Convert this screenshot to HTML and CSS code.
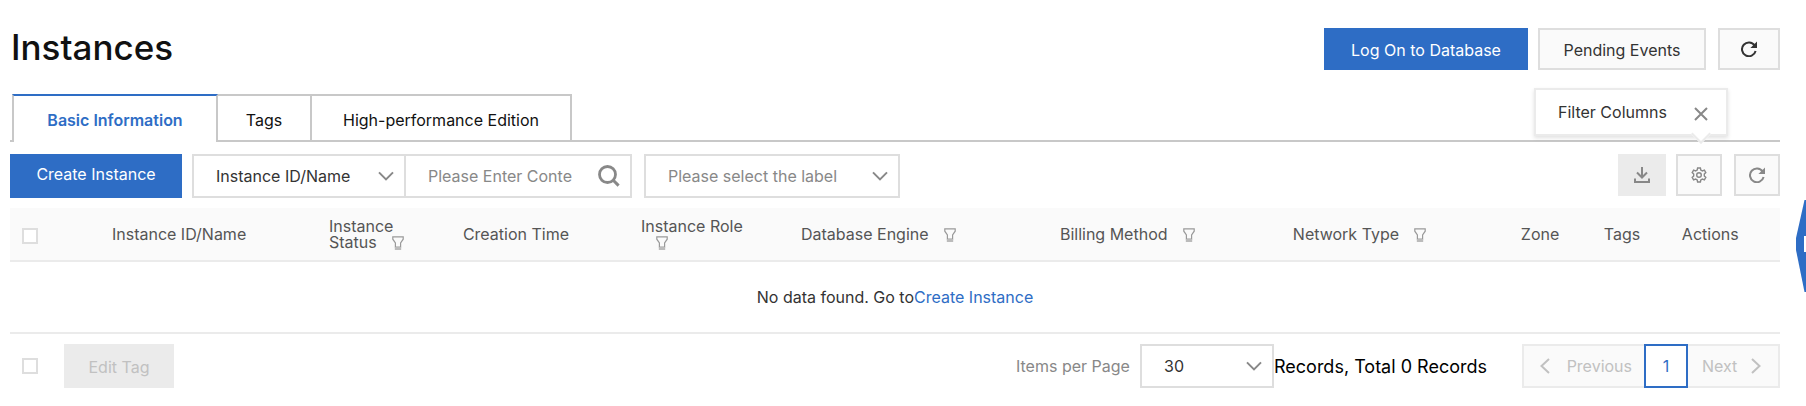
FILE: index.html
```html
<!DOCTYPE html>
<html lang="en">
<head>
<meta charset="utf-8">
<title>Instances</title>
<link rel="stylesheet" href="styles.css">
</head>
<body>
<svg class="sprite" aria-hidden="true">
  <symbol id="refresh" viewBox="0 0 16 16"><path d="M13.6 4.4A6.9 6.9 0 1 0 14.6 10" fill="none" stroke="currentColor" stroke-width="2"/><path d="M16 .4V7H9.4z" fill="currentColor"/></symbol>
  <symbol id="chevron" viewBox="0 0 16 10"><path d="M1 1.4l7 7 7-7" fill="none" stroke="currentColor" stroke-width="2"/></symbol>
  <symbol id="funnel" viewBox="0 0 12 14"><path d="M.8.8h10.4v2.4L8.6 7v4H3.4V7L.8 3.200z" fill="none" stroke="currentColor" stroke-width="1.200"/><path d="M2.800 11h6.400v3H2.800z" fill="#bbb"/></symbol>
</svg>
<main class="page">
  <header class="page-header">
    <h1 class="title">Instances</h1>
    <div class="actions">
      <button class="btn btn-primary" type="button">Log On to Database</button>
      <button class="btn btn-normal" type="button">Pending Events</button>
      <button class="btn btn-normal btn-refresh" type="button" aria-label="Refresh"><svg class="icon"><use href="#refresh"/></svg></button>
    </div>
  </header>

  <nav class="tabs">
    <button class="tab tab-active" type="button">Basic Information</button>
    <button class="tab tab-tags" type="button">Tags</button>
    <button class="tab tab-edition" type="button">High-performance Edition</button>
  </nav>

  <div class="toolbar">
    <button class="btn btn-primary btn-create" type="button">Create Instance</button>
    <div class="search-group">
      <div class="select field-type">
        <select aria-label="Search by"><option>Instance ID/Name</option></select>
        <svg class="chevron"><use href="#chevron"/></svg>
      </div>
      <div class="search">
        <input type="text" placeholder="Please Enter Content" aria-label="Search content">
        <button class="search-btn" type="button" aria-label="Search"><svg viewBox="0 0 22 22"><circle cx="9.500" cy="9.500" r="8" fill="none" stroke="currentColor" stroke-width="2.800"/><path d="M15 15l5.600 5.600" stroke="currentColor" stroke-width="3"/></svg></button>
      </div>
    </div>
    <div class="select field-label">
      <select aria-label="Label"><option>Please select the label</option></select>
      <svg class="chevron"><use href="#chevron"/></svg>
    </div>
    <div class="tools">
      <button class="btn btn-export" type="button" disabled aria-label="Export"><svg class="icon" viewBox="0 0 16 16"><path d="M8 0v10M3 5.500l5 5 5-5M1 11.500V15h14v-3.500" fill="none" stroke="currentColor" stroke-width="2"/></svg></button>
      <div class="tool-anchor">
        <button class="btn btn-normal btn-tool" type="button" aria-label="Filter Columns"><svg class="icon" viewBox="0 0 16 16" fill="none" stroke="currentColor" stroke-width="1.400"><path d="M6.600 1h2.800l.4 2 1.600.9 2-.7 1.400 2.400-1.500 1.400v2l1.500 1.400-1.400 2.400-2-.7-1.600.9-.4 2H6.600l-.4-2-1.600-.9-2 .7-1.400-2.400L2.700 9V7L1.200 5.600l1.400-2.400 2 .7L6.200 3z"/><circle cx="8" cy="8" r="2.300"/></svg></button>
        <div class="balloon" role="tooltip">
          <span>Filter Columns</span>
          <button class="balloon-close" type="button" aria-label="Close"><svg viewBox="0 0 14 14"><path d="M1 1l12 12M13 1L1 13" stroke="currentColor" stroke-width="2"/></svg></button>
        </div>
      </div>
      <button class="btn btn-normal btn-tool" type="button" aria-label="Refresh list"><svg class="icon"><use href="#refresh"/></svg></button>
    </div>
  </div>

  <table class="grid">
    <colgroup>
      <col class="c-check"><col class="c-id"><col class="c-status"><col class="c-time"><col class="c-role"><col class="c-engine"><col class="c-billing"><col class="c-network"><col class="c-zone"><col class="c-tags"><col class="c-actions">
    </colgroup>
    <thead>
      <tr>
        <th class="cell-check"><input class="check" type="checkbox" aria-label="Select all"></th>
        <th>Instance ID/Name</th>
        <th>Instance<br>Status<svg class="funnel"><use href="#funnel"/></svg></th>
        <th>Creation Time</th>
        <th>Instance Role<br><svg class="funnel"><use href="#funnel"/></svg></th>
        <th>Database Engine<svg class="funnel"><use href="#funnel"/></svg></th>
        <th>Billing Method<svg class="funnel"><use href="#funnel"/></svg></th>
        <th>Network Type<svg class="funnel"><use href="#funnel"/></svg></th>
        <th>Zone</th>
        <th>Tags</th>
        <th>Actions</th>
      </tr>
    </thead>
    <tbody>
      <tr><td class="empty" colspan="11">No data found. Go to<a href="#create">Create Instance</a></td></tr>
    </tbody>
  </table>

  <footer class="footer">
    <input class="check" type="checkbox" aria-label="Select all on page">
    <button class="btn btn-edit" type="button" disabled>Edit Tag</button>
    <div class="pagination">
      <label class="per-page" for="page-size">Items per Page</label>
      <div class="select field-size">
        <select id="page-size"><option>30</option></select>
        <svg class="chevron"><use href="#chevron"/></svg>
      </div>
      <span class="total">Records, Total 0 Records</span>
      <div class="pager">
        <button class="pager-step pager-prev" type="button" disabled><svg viewBox="0 0 10 16"><path d="M9 1L1.500 8 9 15" fill="none" stroke="currentColor" stroke-width="2"/></svg>Previous</button>
        <button class="pager-current" type="button">1</button>
        <button class="pager-step pager-next" type="button" disabled>Next<svg viewBox="0 0 10 16"><path d="M1 1l7.500 7L1 15" fill="none" stroke="currentColor" stroke-width="2"/></svg></button>
      </div>
    </div>
  </footer>
</main>
<aside class="side-handle"><svg viewBox="0 0 10 92"><path d="M10 0H8.500L0 38v12l8.500 42H10z" fill="#2e6dc5"/><path d="M8 36h2v16H8z" fill="#fff"/></svg></aside>
</body>
</html>
```
FILE: styles.css
```css
* { box-sizing: border-box; }

body {
  margin: 0;
  background: #fff;
  color: #333;
  font-family: Inter, "Liberation Sans", sans-serif;
  font-size: 16px;
  line-height: 20px;
  overflow-x: hidden;
}

button, input, select {
  font: inherit;
  color: inherit;
  border-radius: 0;
  margin: 0;
}

button { background: none; border: 0; padding: 0; white-space: nowrap; }
svg { display: block; }
a { color: #2e6dc5; text-decoration: none; }

.sprite { position: absolute; width: 0; height: 0; }
.page { padding: 28px 26px 18px 10px; }

.page-header { display: flex; justify-content: space-between; height: 66px; }
.title { margin: 0; font-size: 35px; line-height: 38px; font-weight: 500; color: #111; padding-left: 1px; }
.actions { display: flex; align-items: flex-start; }

.btn {
  display: flex;
  align-items: center;
  justify-content: center;
  height: 42px;
  padding: 2px 22px 0;
}
.btn-primary { background: #2e6dc5; color: #fff; min-width: 204px; }
.btn-normal { background: #fafafa; border: 2px solid #dedede; min-width: 168px; margin-left: 10px; }
.btn-refresh { min-width: 62px; width: 62px; padding: 0; margin-left: 12px; }
.icon { width: 16px; height: 16px; }

.tabs { display: flex; border-bottom: 2px solid #c8c8c8; height: 48px; padding-left: 2px; }
.tab {
  height: 46px;
  padding: 4px 20px 0;
  border-top: 2px solid #c8c8c8;
  border-right: 2px solid #c8c8c8;
  color: #111;
}
.tab-tags { min-width: 94px; }
.tab-edition { min-width: 260px; }
.tab-active {
  height: 48px;
  min-width: 206px;
  padding-top: 2px;
  border-left: 2px solid #c8c8c8;
  border-top-color: #2e6dc5;
  background: #fff;
  color: #2e6dc5;
  font-weight: 600;
}

.toolbar { display: flex; align-items: flex-start; padding: 12px 0 10px; }
.btn-create { height: 44px; min-width: 172px; padding: 0 22px 4px; }
.search-group { display: flex; margin-left: 10px; }

.select { position: relative; height: 44px; border: 2px solid #dedede; background: #fff; }
.select select {
  appearance: none;
  width: 100%;
  height: 100%;
  padding: 0 44px 0 22px;
  border: 0;
  background: transparent;
}
.chevron {
  position: absolute;
  right: 10px;
  top: 15px;
  width: 16px;
  height: 10px;
  color: #888;
  pointer-events: none;
}
.field-type { width: 214px; }
.search { display: flex; align-items: center; width: 226px; border: 2px solid #dedede; border-left: 0; height: 44px; }
.search input { flex: 1; min-width: 0; height: 100%; margin-left: 22px; padding: 0; border: 0; background: none; }
.search input::placeholder { color: #888; opacity: 1; }
.search-btn { margin: 0 10px 0 26px; color: #888; }
.search-btn svg { width: 22px; height: 22px; }
.field-label { width: 256px; margin-left: 12px; color: #888; }

.tools { display: flex; margin-left: auto; color: #888; }
.btn-export { width: 48px; padding: 0; background: #ebebeb; color: #888; }
.tool-anchor { position: relative; margin-right: 2px; }
.btn-tool { min-width: 46px; width: 46px; padding: 0; }

.balloon {
  position: absolute;
  right: -6px;
  bottom: 60px;
  display: flex;
  align-items: center;
  justify-content: space-between;
  width: 194px;
  height: 48px;
  padding: 0 18px 0 22px;
  background: #fff;
  border: 2px solid #ebebeb;
  box-shadow: 0 2px 4px rgba(0, 0, 0, .12);
  color: #333;
  white-space: nowrap;
}
.balloon::after {
  content: "";
  position: absolute;
  right: 18px;
  bottom: -7px;
  width: 12px;
  height: 12px;
  background: #fff;
  border: solid #ebebeb;
  border-width: 0 2px 2px 0;
  transform: rotate(45deg);
}
.balloon-close { color: #888; margin-top: 3px; }
.balloon-close svg { width: 14px; height: 14px; }

.grid { width: 100%; table-layout: fixed; border-collapse: separate; border-spacing: 0; }
.c-check { width: 5.76%; }
.c-id { width: 12.26%; }
.c-status { width: 7.57%; }
.c-time { width: 10.06%; }
.c-role { width: 9.04%; }
.c-engine { width: 14.63%; }
.c-billing { width: 13.16%; }
.c-network { width: 12.88%; }
.c-zone { width: 4.69%; }
.c-tags { width: 4.41%; }
.c-actions { width: 5.54%; }
.grid th {
  height: 54px;
  padding: 0;
  background: #fafafa;
  border-bottom: 2px solid #ebebeb;
  color: #555;
  font-weight: 400;
  line-height: 16px;
  text-align: left;
  white-space: nowrap;
}
.grid .cell-check { padding: 4px 0 0 12px; }
.funnel { display: inline-block; width: 12px; height: 14px; margin-left: 15px; color: #999; vertical-align: -2px; }
.empty { height: 72px; padding: 0; border-bottom: 2px solid #ebebeb; text-align: center; }

.check { display: block; appearance: none; width: 16px; height: 16px; border: 2px solid #dedede; background: #fff; }

.footer { display: flex; align-items: center; padding: 10px 0 0 12px; }
.btn-edit { width: 110px; height: 44px; margin-left: 26px; background: #ebebeb; color: #c1c1c1; }
.pagination { display: flex; align-items: center; margin-left: auto; }
.per-page { color: #888; min-width: 124px; }
.field-size { width: 134px; }
.total { min-width: 226px; font-size: 18px; line-height: 22px; color: #000; padding-top: 2px; }
.pager { display: flex; margin-left: 22px; height: 44px; background: #fafafa; }
.pager-step {
  display: flex;
  align-items: center;
  justify-content: space-between;
  border: 2px solid #ebebeb;
  color: #c1c1c1;
}
.pager-prev { min-width: 122px; border-right: 0; padding: 0 12px 0 16px; }
.pager-next { min-width: 92px; border-left: 0; padding: 0 17px 0 14px; }
.pager-step svg { width: 10px; height: 16px; }
.pager-current { width: 44px; border: 2px solid #2e6dc5; background: #fff; color: #2e6dc5; }

.side-handle { position: fixed; right: 0; top: 200px; width: 10px; height: 92px; }
.side-handle svg { width: 10px; height: 92px; }
```
